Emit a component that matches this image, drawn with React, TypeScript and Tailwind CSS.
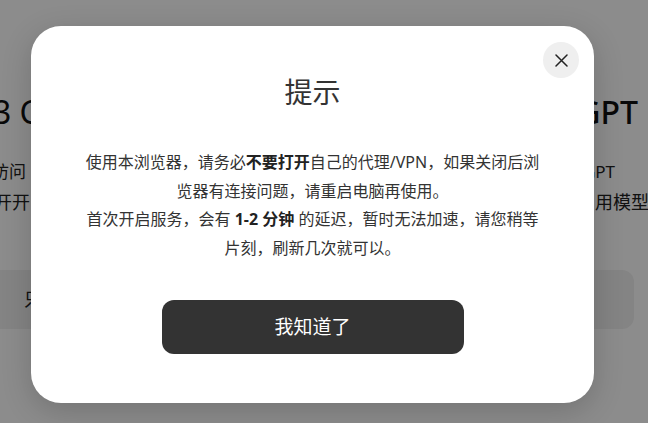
import React from "react";

export default function App() {
  return (
    <div
      className="relative h-[423px] w-[648px] overflow-hidden bg-white text-[#111]"
      style={{ fontFamily: '"Noto Sans", "Noto Sans CJK SC", sans-serif' }}
    >
      {/* background page */}
      <div className="flex flex-col pt-[90px]">
        <div className="flex h-[44px] items-center justify-between whitespace-nowrap text-[32px] leading-none">
          <span className="-ml-[7px]">3 Chat</span>
          <span className="mr-[10px] font-medium">ChatGPT</span>
        </div>
        <div className="mt-[25px] flex h-[24px] items-center justify-between whitespace-nowrap text-[17px] leading-none text-[#222]">
          <span className="-ml-[8px]">访问</span>
          <span className="mr-[33px]">GPT</span>
        </div>
        <div className="mt-[6px] flex h-[26px] items-center justify-between whitespace-nowrap text-[18px] leading-none text-[#222]">
          <span className="-ml-[6px]">开开</span>
          <span className="-mr-[1px]">用模型</span>
        </div>
        <div className="-ml-4 mr-[14px] mt-[55px] flex h-[59px] items-center rounded-xl bg-[#f0f0f0] pl-[40px] text-[18px] text-[#222]">
          只
        </div>
      </div>

      {/* overlay */}
      <div className="absolute inset-0 flex items-start bg-black/45 pl-[31px] pt-[26px]">
        <div className="relative flex h-[377px] w-[563px] flex-col items-center rounded-[30px] bg-white shadow-[0_8px_30px_rgba(0,0,0,0.18)]">
          <button className="absolute right-[15px] top-4 flex h-9 w-9 items-center justify-center rounded-full bg-[#efefef]">
            <svg width="13" height="13" viewBox="0 0 13 13" fill="none">
              <path d="M1 1L12 12M12 1L1 12" stroke="#222" strokeWidth="1.5" strokeLinecap="round" />
            </svg>
          </button>

          <h2 className="mt-[47px] text-[28px] font-normal leading-[39px] text-[#333]">提示</h2>

          <div className="mt-[36px] flex flex-col items-center whitespace-nowrap text-[16px] leading-[28.5px] text-[#333]">
            <p>
              使用本浏览器，请务必<b className="font-bold text-[#222]">不要打开</b>自己的代理/VPN，如果关闭后浏
            </p>
            <p>览器有连接问题，请重启电脑再使用。</p>
            <p>
              首次开启服务，会有 <b className="font-bold text-[#222]">1-2 分钟</b> 的延迟，暂时无法加速，请您稍等
            </p>
            <p>片刻，刷新几次就可以。</p>
          </div>

          <button className="mt-[38px] flex h-[54px] w-[302px] items-center justify-center rounded-xl bg-[#333333] text-[19px] text-white">
            我知道了
          </button>
        </div>
      </div>
    </div>
  );
}
